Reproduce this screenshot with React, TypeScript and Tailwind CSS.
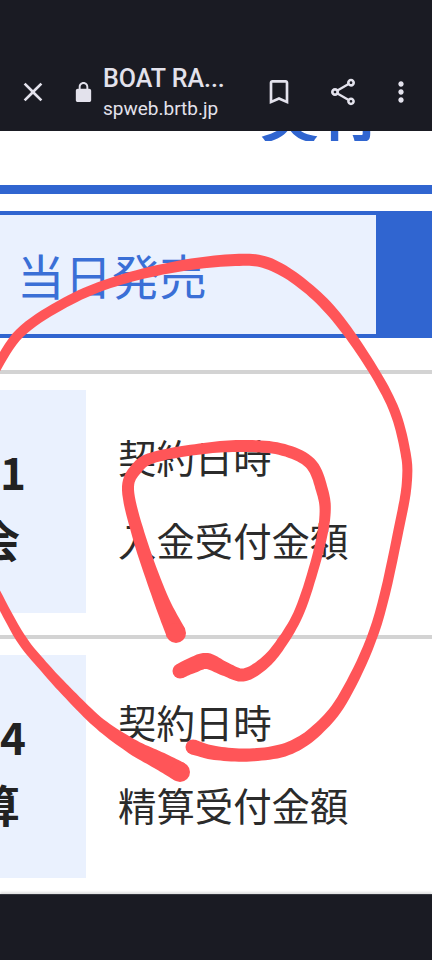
import React from 'react';

type Pt = [number, number, number];

// pen strokes drawn over the screenshot: x, y, width
const outerStroke: Pt[] = [
  [-8, 376, 9], [20, 333, 10], [70, 300, 10], [120, 280, 10], [180, 266, 11], [235, 260, 12], [267, 263, 12],
  [300, 282, 11], [333, 313, 11], [367, 360, 10], [393, 407, 10], [405, 450, 10], [407, 480, 10], [400, 523, 10],
  [377, 623, 10], [345, 695, 11], [317, 730, 12], [287, 749, 13], [250, 755, 13], [215, 753, 14], [193, 747, 15],
];
const leftStroke: Pt[] = [
  [-8, 585, 9], [20, 637, 10], [45, 668, 10], [70, 695, 11], [100, 724, 12], [133, 747, 15], [160, 761, 18], [180, 772, 20],
];
const innerStroke: Pt[] = [
  [176, 633, 20], [160, 597, 15], [140, 540, 13], [128, 490, 12], [137, 468, 12], [155, 457, 11], [200, 449, 11], [240, 446, 12],
  [280, 449, 12], [310, 463, 12], [322, 490, 12], [325, 515, 11], [318, 553, 10], [300, 610, 10], [280, 645, 11],
  [262, 665, 12], [243, 675, 13], [225, 669, 14], [207, 661, 16], [193, 665, 16], [180, 671, 15],
];

function strokePath(pts: Pt[]) {
  const samples: Pt[] = [];
  for (let i = 0; i < pts.length - 1; i++) {
    const p0 = pts[Math.max(i - 1, 0)];
    const p1 = pts[i];
    const p2 = pts[i + 1];
    const p3 = pts[Math.min(i + 2, pts.length - 1)];
    for (let s = 0; s < 10; s++) {
      const t = s / 10;
      const cr = (k: number) =>
        0.5 * (2 * p1[k] + (p2[k] - p0[k]) * t + (2 * p0[k] - 5 * p1[k] + 4 * p2[k] - p3[k]) * t * t + (3 * p1[k] - p0[k] - 3 * p2[k] + p3[k]) * t * t * t);
      samples.push([cr(0), cr(1), cr(2)]);
    }
  }
  samples.push(pts[pts.length - 1]);
  const left: string[] = [];
  const right: string[] = [];
  samples.forEach((p, i) => {
    const a = samples[Math.max(i - 1, 0)];
    const b = samples[Math.min(i + 1, samples.length - 1)];
    const dx = b[0] - a[0];
    const dy = b[1] - a[1];
    const len = Math.hypot(dx, dy) || 1;
    const nx = (-dy / len) * (p[2] / 2);
    const ny = (dx / len) * (p[2] / 2);
    left.push(`${(p[0] + nx).toFixed(1)} ${(p[1] + ny).toFixed(1)}`);
    right.unshift(`${(p[0] - nx).toFixed(1)} ${(p[1] - ny).toFixed(1)}`);
  });
  return `M${left.join('L')}L${right.join('L')}Z`;
}

const Annotation = () => (
  <svg className="absolute left-0 top-0 pointer-events-none" width={432} height={960} viewBox="0 0 432 960" fill="#ff5558">
    {[outerStroke, leftStroke, innerStroke].map((pts, i) => (
      <g key={i}>
        <path d={strokePath(pts)} />
        <circle cx={pts[0][0]} cy={pts[0][1]} r={pts[0][2] / 2} />
        <circle cx={pts[pts.length - 1][0]} cy={pts[pts.length - 1][1]} r={pts[pts.length - 1][2] / 2} />
      </g>
    ))}
  </svg>
);

const Icon = ({ d, size = 32 }: { d: string; size?: number }) => (
  <svg width={size} height={size} viewBox="0 0 24 24" fill="currentColor">
    <path d={d} />
  </svg>
);

const Row = ({ num, label, second }: { num: string; label: string; second: string }) => (
  <div className="flex h-[223px]">
    <div className="flex w-[86px] flex-col items-end justify-center overflow-hidden bg-[#eaf1fe] pt-[6px] pr-[66px] text-[44px] font-bold leading-[68px] text-[#222222] whitespace-nowrap">
      <span className="translate-x-[6px]">{num}</span>
      <span>{label}</span>
    </div>
    <div className="flex flex-col justify-center pb-[8px] pl-[32px] text-[38.4px] leading-[83px] text-[#2b2b2b]">
      <span>契約日時</span>
      <span>{second}</span>
    </div>
  </div>
);

export default function App() {
  return (
    <div className="relative flex h-[960px] w-[432px] flex-col overflow-hidden bg-white font-['Noto_Sans_CJK_JP','Noto_Sans',sans-serif]">
      <header className="flex h-[131px] shrink-0 items-center bg-[#1a1b23] pt-[53px] text-[#e3e2ec] font-['Roboto',sans-serif]">
        <div className="ml-[17px] flex w-[32px] justify-center">
          <Icon d="M19 6.41 17.59 5 12 10.59 6.41 5 5 6.41 10.59 12 5 17.59 6.41 19 12 13.41 17.59 19 19 17.59 13.41 12z" />
        </div>
        <div className="ml-[23px] w-[23px]">
          <Icon size={23} d="M18 8h-1V6c0-2.76-2.24-5-5-5S7 3.24 7 6v2H6c-1.1 0-2 .9-2 2v10c0 1.1.9 2 2 2h12c1.1 0 2-.9 2-2V10c0-1.1-.9-2-2-2zM9 8V6c0-1.66 1.34-3 3-3s3 1.34 3 3v2H9z" />
        </div>
        <div className="ml-[8px] flex w-[160px] flex-col">
          <span className="text-[25px] font-medium leading-[32px]">BOAT RA...</span>
          <span className="mt-[1px] text-[19px] leading-[26px]">spweb.brtb.jp</span>
        </div>
        <Icon d="M17 3H7c-1.1 0-2 .9-2 2v16l7-3 7 3V5c0-1.1-.9-2-2-2zm0 15-5-2.18L7 18V5h10v13z" />
        <div className="ml-[32px]">
          <Icon d="M18 16.08c-.76 0-1.44.3-1.96.77L8.91 12.7c.05-.23.09-.46.09-.7s-.04-.47-.09-.7l7.05-4.11c.54.5 1.25.81 2.04.81 1.66 0 3-1.34 3-3s-1.34-3-3-3-3 1.34-3 3c0 .24.04.47.09.7L8.04 9.81C7.5 9.31 6.79 9 6 9c-1.66 0-3 1.34-3 3s1.34 3 3 3c.79 0 1.5-.31 2.04-.81l7.12 4.16c-.05.21-.08.43-.08.65 0 1.61 1.31 2.92 2.92 2.92s2.92-1.31 2.92-2.92-1.31-2.92-2.92-2.92zM18 4c.55 0 1 .45 1 1s-.45 1-1 1-1-.45-1-1 .45-1 1-1zM6 13c-.55 0-1-.45-1-1s.45-1 1-1 1 .45 1 1-.45 1-1 1zm12 7.02c-.55 0-1-.45-1-1s.45-1 1-1 1 .45 1 1-.45 1-1 1z" />
        </div>
        <div className="ml-[26px]">
          <Icon d="M12 8c1.1 0 2-.9 2-2s-.9-2-2-2-2 .9-2 2 .9 2 2 2zm0 2c-1.1 0-2 .9-2 2s.9 2 2 2 2-.9 2-2-.9-2-2-2zm0 6c-1.1 0-2 .9-2 2s.9 2 2 2 2-.9 2-2-.9-2-2-2z" />
        </div>
      </header>

      <main className="flex h-[763px] shrink-0 flex-col">
        <div className="flex h-[10px] items-end justify-end overflow-hidden pr-[51px]">
          <span className="text-[61px] font-bold leading-[61px] text-[#3065d0]">実行</span>
        </div>
        <div className="mt-[44px] h-[9px] bg-[#3065d0]" />
        <div className="mt-[17px] flex h-[127px] border-y-4 border-[#3065d0] bg-[#3065d0]">
          <div className="flex w-[376px] items-center bg-[#eaf1fe] pl-[17px] text-[47.5px] leading-none text-[#3a6fd6]">
            当日発売
          </div>
        </div>
        <div className="mt-[32px] h-[4px] bg-[#d3d3d3]" />
        <div className="pt-[16px]">
          <Row num="1" label="入会" second="入金受付金額" />
        </div>
        <div className="mt-[22px] h-[4px] bg-[#d3d3d3]" />
        <div className="pt-[16px]">
          <Row num="4" label="精算" second="精算受付金額" />
        </div>
      </main>

      <footer className="flex-1 border-t border-[#33353d] bg-[#1a1b23] shadow-[0_-2px_2px_rgba(0,0,0,0.12)]" />

      <Annotation />
    </div>
  );
}
